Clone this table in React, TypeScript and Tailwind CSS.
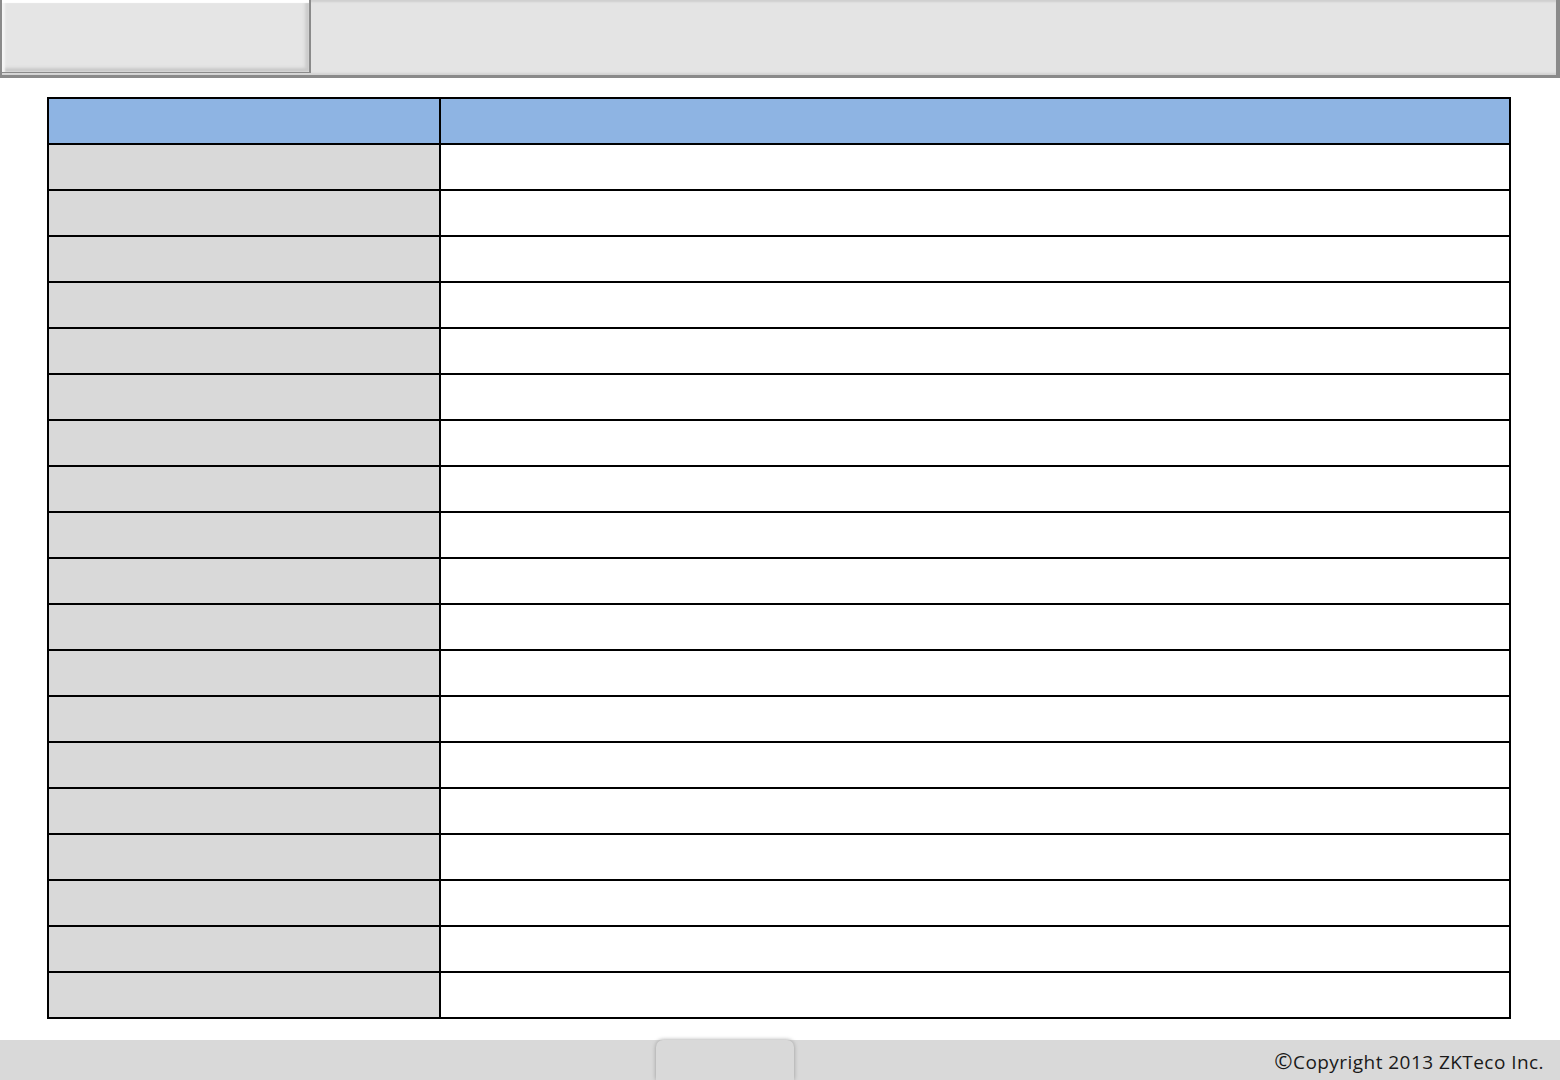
const rows = Array.from({ length: 19 }, (_, i) => i);

export default function App() {
  return (
    <div className="flex h-[1080px] w-[1560px] flex-col overflow-hidden bg-white font-['Open_Sans',sans-serif]">
      {/* top bar */}
      <div className="flex h-[78px] shrink-0 border-b-[3px] border-l-2 border-r-[4px] border-[#8a8a8a] bg-[#e4e4e4] shadow-[inset_0_3px_2px_-1px_#cfcfcf,inset_0_-3px_2px_-1px_#d2d2d2]">
        <div className="h-[73px] w-[309px] border-r-2 border-b border-[#8a8a8a] bg-[#e5e5e5] shadow-[inset_0_3px_1px_0_#ffffff,inset_3px_0_2px_0_#f4f4f4,inset_0_-4px_3px_0_#c9c9c9,inset_-4px_0_3px_0_#cccccc]" />
      </div>

      {/* table */}
      <div className="ml-[47px] mt-[19px] w-[1464px] border-2 border-black">
        <div className="flex h-[44px]">
          <div className="w-[392px] border-r-2 border-black bg-[#8eb4e3]" />
          <div className="flex-1 bg-[#8eb4e3]" />
        </div>
        {rows.map((r) => (
          <div key={r} className="flex h-[46px] border-t-2 border-black">
            <div className="w-[392px] border-r-2 border-black bg-[#d9d9d9]" />
            <div className="flex-1 bg-white" />
          </div>
        ))}
      </div>

      {/* footer */}
      <div className="mt-auto flex h-[40px] shrink-0 items-end bg-[#d9d9d9]">
        <div className="ml-[656px] h-[40px] w-[138px] rounded-t-[7px] bg-[#d9d9d9] shadow-[0_0_4px_0_#9a9a9a]" />
        <div className="ml-auto self-center pr-[16px] text-[19px] leading-none tracking-[0.45px] text-[#1a1a1a]">
          <span className="text-[22px]">©</span>Copyright 2013 ZKTeco Inc.
        </div>
      </div>
    </div>
  );
}
